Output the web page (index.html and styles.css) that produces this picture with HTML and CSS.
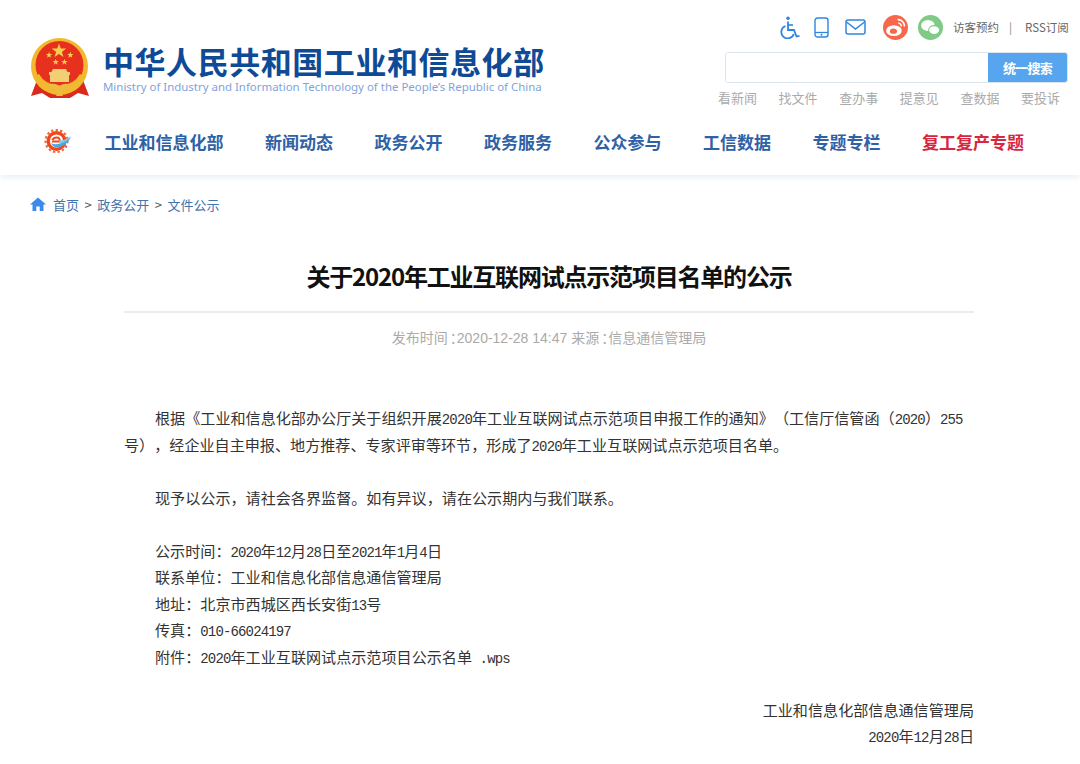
FILE: index.html
```html
<!DOCTYPE html>
<html lang="zh-CN">
<head>
<meta charset="utf-8">
<title>关于2020年工业互联网试点示范项目名单的公示</title>
<link rel="stylesheet" href="styles.css">
</head>
<body>
<header class="site-header">
  <div class="top">
    <div class="brand">
      <svg class="emblem" viewBox="0 0 60 60" aria-hidden="true">
        <defs>
          <polygon id="star" points="0,-5 1.2,-1.6 4.8,-1.6 1.9,0.6 3,4 0,2 -3,4 -1.9,0.6 -4.8,-1.6 -1.2,-1.6"/>
        </defs>
        <path d="M7 42 L1 58 L12 55 L20 60 L40 60 L48 55 L59 58 L53 42 Z" fill="#d92a1e"/>
        <circle cx="29.5" cy="28.5" r="28.5" fill="#f2b82e"/>
        <circle cx="29.5" cy="27" r="24" fill="#e8301f"/>
        <use href="#star" x="29" y="13" fill="#f6cf4c" transform="translate(-14.5 -6.5) scale(1.5)"/>
        <use href="#star" x="19" y="17" fill="#f6cf4c" transform="translate(6.3 5.7) scale(.67)"/>
        <use href="#star" x="52" y="17" fill="#f6cf4c" transform="translate(5.5 5.7) scale(.67)"/>
        <use href="#star" x="29" y="24" fill="#f6cf4c" transform="translate(6.3 7.9) scale(.67)"/>
        <use href="#star" x="42" y="24" fill="#f6cf4c" transform="translate(6.3 7.9) scale(.67)"/>
        <path d="M23 31 H36 L37.5 34 H40 V37 H39 V44 H20 V37 H19 V34 H21.5 Z" fill="#f3cf73"/>
        <path d="M5 38 Q10 52 29.5 53 Q49 52 54 38 L50 36 Q44 47 29.5 47.5 Q15 47 9 36 Z" fill="#f2b82e"/>
        <path d="M18 47 Q24 44 29.5 48 Q35 44 41 47 L39 52 Q34 50 31 54 L33 58 H26 L28 54 Q25 50 20 52 Z" fill="#eebb3e"/>
      </svg>
      <div class="brand-text">
        <div class="brand-cn">中华人民共和国工业和信息化部</div>
        <div class="brand-en">Ministry of Industry and Information Technology of the People’s Republic of China</div>
      </div>
    </div>
    <div class="tools">
      <div class="tool-row">
        <svg class="ic ic-a" viewBox="0 0 20 23" aria-hidden="true">
          <circle cx="8" cy="2.2" r="1.8" fill="#2f86de"/>
          <path d="M8 5.5 V14 H14 L16.5 20.5 L19.5 19.8" fill="none" stroke="#2f86de" stroke-width="1.8"/>
          <path d="M8 9 H13" fill="none" stroke="#2f86de" stroke-width="1.6"/>
          <path d="M5.5 10 A6.4 6.4 0 1 0 13.8 18" fill="none" stroke="#2f86de" stroke-width="1.8"/>
        </svg>
        <svg class="ic ic-p" viewBox="0 0 15 21" aria-hidden="true">
          <rect x="1" y="1" width="13" height="19" rx="2.5" fill="none" stroke="#2f86de" stroke-width="1.4"/>
          <path d="M1 15.5 H14" stroke="#2f86de" stroke-width="1.3"/>
          <circle cx="7.5" cy="17.8" r="1" fill="#2f86de"/>
        </svg>
        <svg class="ic ic-m" viewBox="0 0 21 16" aria-hidden="true">
          <rect x="1" y="1" width="19" height="14" rx="2" fill="none" stroke="#2f86de" stroke-width="1.5"/>
          <path d="M1.5 3 L10.5 10 L19.5 3" fill="none" stroke="#2f86de" stroke-width="1.5"/>
        </svg>
        <span class="disc disc-w">
          <svg viewBox="0 0 24 24" aria-hidden="true">
            <ellipse cx="10.5" cy="15" rx="7.5" ry="5.2" fill="#fff"/>
            <ellipse cx="10" cy="15.5" rx="3.4" ry="2.6" fill="#f8674a"/>
            <path d="M14 4.5 A6 6 0 0 1 20.5 11" fill="none" stroke="#fff" stroke-width="1.6"/>
            <path d="M14.5 7.8 A3 3 0 0 1 17.5 11" fill="none" stroke="#fff" stroke-width="1.4"/>
          </svg>
        </span>
        <span class="disc disc-c">
          <svg viewBox="0 0 24 24" aria-hidden="true">
            <ellipse cx="9.5" cy="10" rx="6.5" ry="5.3" fill="#fff"/>
            <ellipse cx="15.5" cy="14.5" rx="5.3" ry="4.3" fill="#fff" stroke="#7fca85" stroke-width="1"/>
          </svg>
        </span>
        <a class="visit">访客预约</a>
        <span class="sep">|</span>
        <a class="rss">RSS订阅</a>
      </div>
      <div class="search">
        <div class="search-input"></div>
        <button class="search-btn">统一搜索</button>
      </div>
      <div class="quick">
        <a>看新闻</a><a>找文件</a><a>查办事</a><a>提意见</a><a>查数据</a><a>要投诉</a>
      </div>
    </div>
  </div>
  <nav class="nav">
    <svg class="nav-logo" viewBox="0 0 28 26" aria-hidden="true">
      <circle cx="12.5" cy="13" r="11" fill="none" stroke="#ee6a3a" stroke-width="2.2" stroke-dasharray="2.4 2.2"/>
      <circle cx="12.5" cy="13" r="8.3" fill="none" stroke="#f0481c" stroke-width="3.4"/>
      <path d="M8 13.5 H15.5 Q16.5 9.5 12.5 9.5 Q9.5 9.5 8.5 12" fill="none" stroke="#f0481c" stroke-width="2"/>
      <path d="M7 15 Q13 19.5 27 9 Q22 18.5 14 19.5 Q9 19.5 7 15 Z" fill="#4aa8dc"/>
      <path d="M15 12.5 Q21 12.5 27 8 Q23 14.5 15 15.5 Z" fill="#7dcbee"/>
    </svg>
    <a>工业和信息化部</a><a>新闻动态</a><a>政务公开</a><a>政务服务</a><a>公众参与</a><a>工信数据</a><a>专题专栏</a><a class="hot">复工复产专题</a>
  </nav>
</header>
<div class="crumbs">
  <svg class="home" viewBox="0 0 16 14" aria-hidden="true"><path d="M8 0.5 L16 7.5 H13.5 V14 H9.7 V9.5 H6.3 V14 H2.5 V7.5 H0 Z" fill="#3b8aea"/></svg>
  <a>首页</a><span>&gt;</span><a>政务公开</a><span>&gt;</span><a>文件公示</a>
</div>
<main class="article">
  <h1>关于2020年工业互联网试点示范项目名单的公示</h1>
  <div class="meta">发布时间<span class="colon">：</span>2020-12-28 14:47 来源<span class="colon">：</span>信息通信管理局</div>
  <div class="body">
    <p class="in">根据《工业和信息化部办公厅关于组织开展<span class="num">2020</span>年工业互联网试点示范项目申报工作的通知》（工信厅信管函（<span class="num">2020</span>）<span class="num">255</span>号），经企业自主申报、地方推荐、专家评审等环节，形成了<span class="num">2020</span>年工业互联网试点示范项目名单。</p>
    <p class="in gap">现予以公示，请社会各界监督。如有异议，请在公示期内与我们联系。</p>
    <p class="in gap">公示时间：<span class="num">2020</span>年<span class="num">12</span>月<span class="num">28</span>日至<span class="num">2021</span>年<span class="num">1</span>月<span class="num">4</span>日</p>
    <p class="in">联系单位：工业和信息化部信息通信管理局</p>
    <p class="in">地址：北京市西城区西长安街<span class="num">13</span>号</p>
    <p class="in">传真：<span class="num">010-66024197</span></p>
    <p class="in">附件：<span class="num">2020</span>年工业互联网试点示范项目公示名单<span class="num"> .wps</span></p>
    <p class="sign gap">工业和信息化部信息通信管理局</p>
    <p class="sign"><span class="num">2020</span>年<span class="num">12</span>月<span class="num">28</span>日</p>
  </div>
</main>
</body>
</html>
```

FILE: styles.css
```css
* { box-sizing: border-box; }
html, body { margin: 0; padding: 0; }
body { background: #fff; font-family: "Noto Sans CJK SC", sans-serif; width: 1080px; height: 764px; overflow: hidden; text-spacing-trim: space-all; }
a { color: inherit; text-decoration: none; }

.site-header { height: 175px; box-shadow: 0 2px 6px rgba(120,150,190,.18); }
.top { display: flex; justify-content: space-between; padding: 13px 12px 0 30px; height: 115px; }
.brand { display: flex; align-items: flex-start; gap: 13px; height: 60px; margin-top: 25px; }
.emblem { width: 60px; height: 60px; }
.brand-text { display: flex; flex-direction: column; margin-top: 6px; }
.brand-cn { font-size: 31px; line-height: 34px; font-weight: 700; color: #0f4a96; letter-spacing: 0.55px; white-space: nowrap; }
.brand-en { font-family: "Noto Sans", sans-serif; font-size: 11.45px; line-height: 16px; color: #7fa3dc; white-space: nowrap; margin-top: 1px; }

.tools { width: 343px; display: flex; flex-direction: column; }
.tool-row { display: flex; align-items: center; height: 28px; font-size: 11.5px; color: #666; white-space: nowrap; }
.ic { display: block; flex: none; }
.ic-a { width: 20px; height: 23px; margin-left: 55px; }
.ic-p { width: 15px; height: 21px; margin-left: 14px; }
.ic-m { width: 21px; height: 16px; margin-left: 16px; }
.disc { width: 25px; height: 25px; border-radius: 50%; flex: none; display: flex; }
.disc svg { width: 25px; height: 25px; }
.disc-w { background: #f8674a; margin-left: 17px; }
.disc-c { background: #7fca85; margin-left: 10px; }
.visit { margin-left: 10px; }
.sep { margin-left: 10px; color: #888; }
.rss { margin-left: 13px; }

.search { display: flex; height: 31px; margin-top: 11px; border: 1px solid #dbe5f0; border-radius: 3px; overflow: hidden; flex: none; }
.search-input { flex: 1; background: #fff; }
.search-btn { width: 79px; border: 0; padding: 0; background: #56a5ee; color: #fff; font: 700 13px "Noto Sans CJK SC", sans-serif; letter-spacing: -0.7px; }
.quick { display: flex; justify-content: flex-end; gap: 21.6px; font-size: 13px; color: #aaa; margin-top: 5px; line-height: 19px; padding-right: 8px; white-space: nowrap; }

.nav { display: flex; align-items: center; height: 54px; padding: 0 0 2px 44px; gap: 41.5px; font-size: 17px; font-weight: 700; color: #2f61a6; }
.nav-logo { width: 28px; height: 26px; margin-right: -9px; }
.hot { color: #d8263f; }

.crumbs { display: flex; align-items: center; height: 20px; margin: 19px 0 0 30px; font-size: 13px; color: #4273ad; }
.home { width: 16px; height: 14px; margin-right: 7px; }
.crumbs span { margin: 0 5.5px; color: #555; }

.article { width: 850px; margin: 0 0 0 124px; }
h1 { margin: 0; text-align: center; font-size: 24px; font-weight: 700; line-height: 36px; padding: 44px 0 17px; color: #111; letter-spacing: -1.2px; border-bottom: 2px solid #ececec; }
.meta { text-align: center; font-family: "Liberation Sans", "Noto Sans CJK SC", sans-serif; font-size: 14px; line-height: 20px; color: #aaa; margin-top: 15px; font-feature-settings: "halt"; }
.colon { padding-left: 2px; }
.body { margin-top: 56px; font-size: 15.1px; line-height: 26.5px; color: #333; }
.body p { margin: 0; }
.num { font-family: "Liberation Mono", monospace; font-size: 14px; letter-spacing: -0.85px; line-height: 1; }
.in { text-indent: 31px; }
.gap { margin-top: 26.5px !important; }
.sign { text-align: right; }
```
